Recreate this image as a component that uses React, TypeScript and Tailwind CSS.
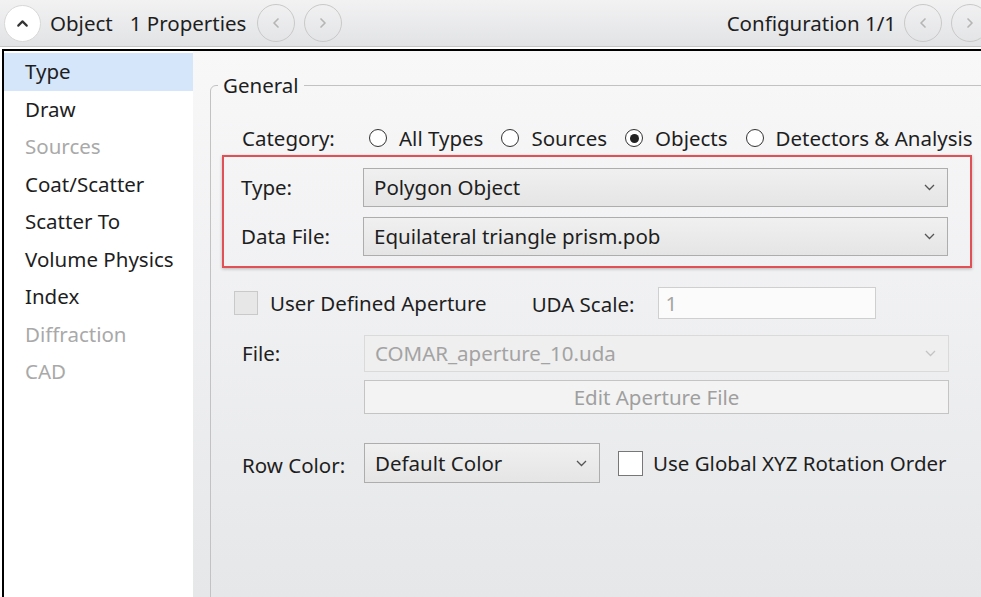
import { ChevronUp, ChevronLeft, ChevronRight } from 'lucide-react';

const font = { fontFamily: '"Noto Sans", "Open Sans", sans-serif' };

const sidebarItems = [
  { label: 'Type', active: true },
  { label: 'Draw' },
  { label: 'Sources', disabled: true },
  { label: 'Coat/Scatter' },
  { label: 'Scatter To' },
  { label: 'Volume Physics' },
  { label: 'Index' },
  { label: 'Diffraction', disabled: true },
  { label: 'CAD', disabled: true },
];

function Caret({ light }: { light?: boolean }) {
  return (
    <svg width="11" height="7" viewBox="0 0 11 7" className="shrink-0">
      <path d="M1 1l4.5 4.5L10 1" fill="none" stroke={light ? '#c4c4c4' : '#555'} strokeWidth="1.3" />
    </svg>
  );
}

function Radio({ checked, label }: { checked?: boolean; label: string }) {
  return (
    <div className="flex items-center gap-[12px]">
      <span className="w-[18px] h-[18px] rounded-full border border-[#333] bg-white flex items-center justify-center">
        {checked && <span className="w-[9px] h-[9px] rounded-full bg-[#222]" />}
      </span>
      <span>{label}</span>
    </div>
  );
}

function NavCircle({ children }: { children: React.ReactNode }) {
  return (
    <div className="w-[38px] h-[38px] rounded-full border border-[#c9c9c9] flex items-center justify-center text-[#b5b5b5] shrink-0">
      {children}
    </div>
  );
}

function Select({ value, width, disabled, height }: { value: string; width: string; disabled?: boolean; height: string }) {
  return (
    <div
      className={`${width} ${height} flex items-center justify-between pl-[10px] pr-[12px] border ${
        disabled
          ? 'border-[#dadada] bg-[#efefef] text-[#a3a3a3]'
          : 'border-[#adadad] bg-gradient-to-b from-[#f0f0f0] to-[#e5e5e5] text-[#1e1e1e]'
      }`}
    >
      <span>{value}</span>
      <Caret light={disabled} />
    </div>
  );
}

export default function App() {
  return (
    <div className="w-[981px] h-[597px] overflow-hidden bg-white flex flex-col text-[20.5px] text-[#1e1e1e]" style={font}>
      {/* header */}
      <div className="h-[47px] shrink-0 flex items-center bg-gradient-to-b from-[#f2f2f3] to-[#e2e3e5] border-b border-[#c6c6c6] pl-[4px]">
        <div className="w-[37px] h-[37px] rounded-full bg-white border border-[#d8d8d8] flex items-center justify-center">
          <ChevronUp size={17} strokeWidth={3} className="text-[#333]" />
        </div>
        <span className="ml-[9px]">Object</span>
        <span className="ml-[17px]">1 Properties</span>
        <div className="ml-[11px] flex gap-[9px]">
          <NavCircle>
            <ChevronLeft size={16} strokeWidth={2.5} />
          </NavCircle>
          <NavCircle>
            <ChevronRight size={16} strokeWidth={2.5} />
          </NavCircle>
        </div>
        <div className="flex-1" />
        <span className="mr-[8px]">Configuration 1/1</span>
        <div className="flex gap-[9px] mr-[-8px]">
          <NavCircle>
            <ChevronLeft size={16} strokeWidth={2.5} />
          </NavCircle>
          <NavCircle>
            <ChevronRight size={16} strokeWidth={2.5} />
          </NavCircle>
        </div>
      </div>

      {/* body */}
      <div className="flex-1 flex mt-[2px] ml-[2px] border-t-2 border-l-2 border-black min-h-0">
        <div className="w-[189px] shrink-0 bg-white pt-[2px]">
          {sidebarItems.map((item) => (
            <div
              key={item.label}
              className={`h-[37.5px] flex items-center pl-[21px] ${item.active ? 'bg-[#d5e5fa]' : ''} ${
                item.disabled ? 'text-[#a9a9a9]' : ''
              }`}
            >
              {item.label}
            </div>
          ))}
        </div>

        <div className="flex-1 bg-gradient-to-b from-[#f8f8f9] to-[#e6e7e9] pl-[17px] pt-[22px]">
          <fieldset className="border border-[#c2c2c2] rounded-tl-[6px] h-[600px] mr-[-30px] pl-[11px] pt-[26px]">
            <legend className="ml-[-4px] px-[5px] leading-[24px]">General</legend>

            <div className="flex items-center pl-[20px] h-[30px]">
              <span className="w-[127px]">Category:</span>
              <div className="flex items-center gap-[18px]">
                <Radio label="All Types" />
                <Radio label="Sources" />
                <Radio label="Objects" checked />
                <Radio label="Detectors & Analysis" />
              </div>
            </div>

            <div className="mt-[2px] w-[750px] border-[2.5px] border-[#e05055] shadow-[0_1px_3px_rgba(0,0,0,0.25)] pl-[17px] pr-[22px] pt-[11px] pb-[10px] flex flex-col gap-[10px]">
              <div className="flex items-center">
                <span className="w-[122px]">Type:</span>
                <Select value="Polygon Object" width="flex-1" height="h-[39px]" />
              </div>
              <div className="flex items-center">
                <span className="w-[122px]">Data File:</span>
                <Select value="Equilateral triangle prism.pob" width="flex-1" height="h-[39px]" />
              </div>
            </div>

            <div className="mt-[19px] flex items-center pl-[12px] h-[32px]">
              <span className="w-[24px] h-[24px] border border-[#c9c9c9] bg-[#e7e7e7]" />
              <span className="ml-[12px]">User Defined Aperture</span>
              <span className="ml-[45px] mt-[3px]">UDA Scale:</span>
              <div className="ml-[23px] w-[218px] h-[32px] border border-[#cfcfcf] bg-[#fbfbfb] text-[#a5a5a5] flex items-center pl-[7px]">
                1
              </div>
            </div>

            <div className="mt-[16px] flex items-center pl-[20px]">
              <span className="w-[122px]">File:</span>
              <Select value="COMAR_aperture_10.uda" width="w-[585px]" height="h-[37px]" disabled />
            </div>
            <div className="mt-[8px] ml-[142px] w-[585px] h-[34px] border border-[#c4c4c4] bg-[#f3f3f3] text-[#9f9f9f] flex items-center justify-center">
              Edit Aperture File
            </div>

            <div className="mt-[29px] flex items-center pl-[20px]">
              <span className="w-[122px] mt-[4px]">Row Color:</span>
              <div className="w-[236px] h-[40px] flex items-center justify-between pl-[10px] pr-[12px] border border-[#adadad] bg-gradient-to-b from-[#f0f0f0] to-[#e5e5e5]">
                <span>Default Color</span>
                <Caret />
              </div>
              <span className="ml-[18px] w-[25px] h-[25px] border border-[#777] bg-white" />
              <span className="ml-[10px]">Use Global XYZ Rotation Order</span>
            </div>
          </fieldset>
        </div>
      </div>
    </div>
  );
}
